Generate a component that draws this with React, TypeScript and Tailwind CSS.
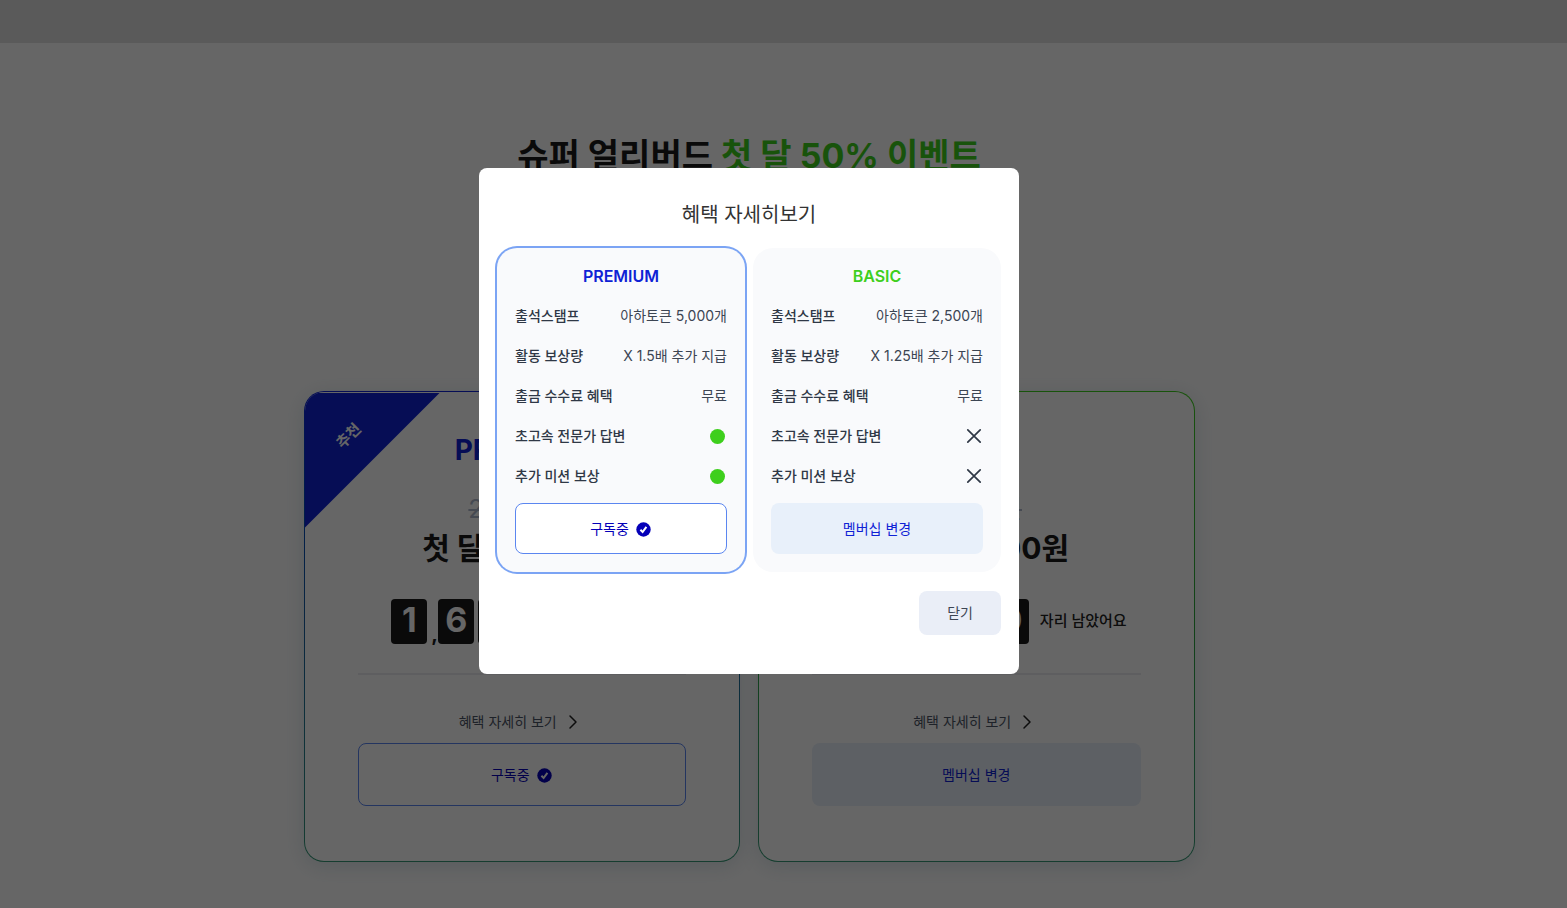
import { ChevronRight } from 'lucide-react';

type Plan = {
  name: string;
  tone: string;
  border: string;
  oldPrice: string;
  price: string;
  seats: string;
  subscribed: boolean;
};

const plans: Plan[] = [
  {
    name: 'PREMIUM',
    tone: 'text-[#0f22d5]',
    border: 'from-[#0f22d5] via-[#1a5fa0] to-[#399a78]',
    oldPrice: '29,800원',
    price: '첫 달 14,900원',
    seats: '1,682',
    subscribed: true,
  },
  {
    name: 'BASIC',
    tone: 'text-[#3ecf1d]',
    border: 'from-[#3ecf1d] via-[#2ba53c] to-[#399a78]',
    oldPrice: '9,800원',
    price: '첫 달 4,900원',
    seats: '12,480',
    subscribed: false,
  },
];

const benefits = [
  { label: '출석스탬프', premium: '아하토큰 5,000개', basic: '아하토큰 2,500개' },
  { label: '활동 보상량', premium: 'X 1.5배 추가 지급', basic: 'X 1.25배 추가 지급' },
  { label: '출금 수수료 혜택', premium: '무료', basic: '무료' },
  { label: '초고속 전문가 답변', premium: true, basic: false },
  { label: '추가 미션 보상', premium: true, basic: false },
];

function CheckBadge() {
  return (
    <svg viewBox="0 0 16 16" className="h-4 w-4" aria-hidden="true">
      <circle cx="7.5" cy="8.5" r="7.2" fill="#0500b8" />
      <path d="M4.4 8.8 6.6 11 10.4 5.8" fill="none" stroke="#fff" strokeWidth="2" />
    </svg>
  );
}

function PlanButton({ subscribed, className }: { subscribed: boolean; className: string }) {
  return subscribed ? (
    <button className={`flex w-full items-center justify-center gap-[7px] rounded-lg border border-[#5b86f0] bg-white text-sm text-[#0500b8] ${className}`}>
      구독중
      <CheckBadge />
    </button>
  ) : (
    <button className={`w-full rounded-lg bg-[#e8f0fa] text-sm text-[#0f22d5] ${className}`}>멤버십 변경</button>
  );
}

function SeatCounter({ seats }: { seats: string }) {
  return (
    <div className="mt-[30px] flex items-center justify-center">
      <div className="flex items-end gap-1">
        {seats.split('').map((char, i) =>
          char === ',' ? (
            <span key={i} className="w-[3px] text-xl leading-5 font-bold text-[#191919]">,</span>
          ) : (
            <span key={i} className="grid h-[45px] w-9 place-items-center rounded bg-[#191919] pb-1 text-[34px] leading-10 font-bold text-white">
              {char}
            </span>
          ),
        )}
      </div>
      <span className="ml-[11px] text-[15px] font-medium text-[#222]">자리 남았어요</span>
    </div>
  );
}

function PlanCard({ plan }: { plan: Plan }) {
  return (
    <section className={`flex-1 rounded-[20px] bg-linear-to-b p-px shadow-[0_4px_20px_rgba(60,110,140,0.18)] ${plan.border}`}>
      <div className="relative overflow-hidden rounded-[19px] bg-white px-[53px] pt-9 pb-[55px] text-center">
        {plan.subscribed && (
          <div className="absolute top-px left-0 h-[135px] w-[135px] bg-[#0f22d5] [clip-path:polygon(0_0,100%_0,0_100%)]">
            <span className="absolute top-8 left-[30px] -rotate-45 text-[15px] font-bold text-white">추천</span>
          </div>
        )}
        <h2 className={`text-[28px] leading-11 font-bold ${plan.tone}`}>{plan.name}</h2>
        <p className="mt-[23px] text-[25px] leading-7 text-[#b0b8cc] line-through">{plan.oldPrice}</p>
        <p className="mt-1 text-[30px] leading-[42px] font-bold text-[#191919]">{plan.price}</p>
        <SeatCounter seats={plan.seats} />
        <hr className="mt-[29px] border-t-2 border-[#eaeaef]" />
        <a href="#benefits" className="mt-[35px] flex items-center justify-center gap-1 text-sm leading-6 text-[#4d5566]">
          혜택 자세히 보기
          <ChevronRight size={24} strokeWidth={1.5} className="text-[#222]" />
        </a>
        <PlanButton subscribed={plan.subscribed} className="mt-[9px] h-[63px]" />
      </div>
    </section>
  );
}

function BenefitValue({ value }: { value: string | boolean }) {
  if (typeof value === 'string') {
    return <>{value}</>;
  }
  return value ? (
    <span className="mr-[2px] block h-[15px] w-[15px] rounded-full bg-[#3ecf1d]" role="img" aria-label="제공" />
  ) : (
    <svg viewBox="0 0 18 18" className="h-[18px] w-[18px]" role="img" aria-label="미제공">
      <path d="M2.8 2.8 15.2 15.2M15.2 2.8 2.8 15.2" stroke="#2f3846" strokeWidth="1.7" strokeLinecap="round" />
    </svg>
  );
}

function BenefitCard({ plan }: { plan: Plan }) {
  return (
    <section
      className={`flex-1 rounded-[20px] bg-[#f9fafc] px-[18px] pt-4 pb-[18px] ${plan.subscribed ? 'ring-2 ring-[#7ba4f4]' : ''}`}
    >
      <h3 className={`text-center text-base leading-6 font-semibold ${plan.tone}`}>{plan.name}</h3>
      <dl className="mt-2 text-sm text-[#3c4553]">
        {benefits.map((item) => (
          <div key={item.label} className="flex h-10 items-center justify-between">
            <dt className="font-medium text-[#2f3846]">{item.label}</dt>
            <dd>
              <BenefitValue value={plan.subscribed ? item.premium : item.basic} />
            </dd>
          </div>
        ))}
      </dl>
      <PlanButton subscribed={plan.subscribed} className="mt-[7px] h-[51px]" />
    </section>
  );
}

export default function App() {
  return (
    <div className="min-h-screen bg-white font-['Inter','Noto_Sans_CJK_KR',sans-serif]">
      <div className="h-[43px] bg-[#e0e0e0]" />
      <main className="pt-[85px] pr-[69px] pb-[46px]">
        <h1 className="text-center text-[34px] leading-14 font-bold text-[#191919]">
          슈퍼 얼리버드 <span className="text-[#3ecf1d]">첫 달 50% 이벤트</span>
        </h1>
        <div className="mx-auto mt-[207px] flex max-w-[891px] gap-[18px]">
          {plans.map((plan) => (
            <PlanCard key={plan.name} plan={plan} />
          ))}
        </div>
      </main>

      <div className="fixed inset-0 flex items-center justify-center bg-black/60 pr-[69px] pb-[66px]">
        <div role="dialog" aria-modal="true" aria-labelledby="benefit-title" className="w-full max-w-[540px] rounded-lg bg-white px-[18px] pt-[29px] pb-[39px]">
          <h2 id="benefit-title" className="text-center text-xl leading-9 text-[#333]">
            혜택 자세히보기
          </h2>
          <div className="mt-[15px] flex gap-2">
            {plans.map((plan) => (
              <BenefitCard key={plan.name} plan={plan} />
            ))}
          </div>
          <div className="mt-[19px] flex justify-end">
            <button className="h-11 rounded-lg bg-[#eaeef7] px-7 text-sm text-[#3c4553]">닫기</button>
          </div>
        </div>
      </div>
    </div>
  );
}
